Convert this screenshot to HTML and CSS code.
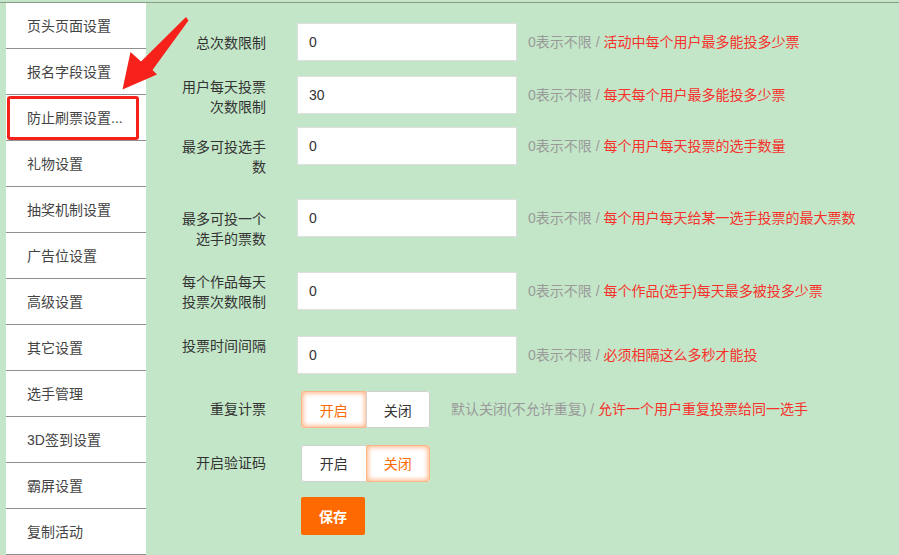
FILE: index.html
```html
<!DOCTYPE html>
<html lang="zh-CN">
<head>
<meta charset="utf-8">
<title>防止刷票设置</title>
<link rel="stylesheet" href="styles.css">
</head>
<body>
<div class="page">
  <nav class="sidebar">
    <div class="nav-item">页头页面设置</div>
    <div class="nav-item">报名字段设置</div>
    <div class="nav-item">防止刷票设置...</div>
    <div class="nav-item">礼物设置</div>
    <div class="nav-item">抽奖机制设置</div>
    <div class="nav-item">广告位设置</div>
    <div class="nav-item">高级设置</div>
    <div class="nav-item">其它设置</div>
    <div class="nav-item">选手管理</div>
    <div class="nav-item">3D签到设置</div>
    <div class="nav-item">霸屏设置</div>
    <div class="nav-item">复制活动</div>
  </nav>
  <main class="main">
    <div class="row r1">
      <label class="label">总次数限制</label>
      <input class="input" type="text" value="0">
      <span class="hint"><span class="gray">0表示不限 / </span><span class="red">活动中每个用户最多能投多少票</span></span>
    </div>
    <div class="row r2">
      <label class="label label--top">用户每天投票次数限制</label>
      <input class="input" type="text" value="30">
      <span class="hint"><span class="gray">0表示不限 / </span><span class="red">每天每个用户最多能投多少票</span></span>
    </div>
    <div class="row r3">
      <label class="label">最多可投选手数</label>
      <input class="input" type="text" value="0">
      <span class="hint"><span class="gray">0表示不限 / </span><span class="red">每个用户每天投票的选手数量</span></span>
    </div>
    <div class="row r4">
      <label class="label">最多可投一个选手的票数</label>
      <input class="input" type="text" value="0">
      <span class="hint"><span class="gray">0表示不限 / </span><span class="red">每个用户每天给某一选手投票的最大票数</span></span>
    </div>
    <div class="row r5">
      <label class="label label--top">每个作品每天投票次数限制</label>
      <input class="input" type="text" value="0">
      <span class="hint"><span class="gray">0表示不限 / </span><span class="red">每个作品(选手)每天最多被投多少票</span></span>
    </div>
    <div class="row r6">
      <label class="label label--top">投票时间间隔</label>
      <input class="input" type="text" value="0">
      <span class="hint"><span class="gray">0表示不限 / </span><span class="red">必须相隔这么多秒才能投</span></span>
    </div>
    <div class="row r7">
      <label class="label label--mid">重复计票</label>
      <div class="toggle">
        <span class="tbtn tbtn--on">开启</span><span class="tbtn">关闭</span>
      </div>
      <span class="hint hint--wide"><span class="gray">默认关闭(不允许重复) / </span><span class="red">允许一个用户重复投票给同一选手</span></span>
    </div>
    <div class="row r8">
      <label class="label label--mid">开启验证码</label>
      <div class="toggle">
        <span class="tbtn">开启</span><span class="tbtn tbtn--on">关闭</span>
      </div>
    </div>
    <div class="row r9">
      <span class="label"></span>
      <button class="save" type="button">保存</button>
    </div>
  </main>
  <div class="mark"></div>
  <svg class="arrow" width="80" height="80" viewBox="110 10 80 80" aria-hidden="true">
    <polygon points="186,17 188.5,20.5 152.5,70 157,74.5 122.5,89.5 130.5,52 141,61.5" fill="#f5211a"/>
  </svg>
</div>
</body>
</html>
```

FILE: styles.css
```css
* { box-sizing: border-box; }

html, body {
  margin: 0;
  padding: 0;
}

body {
  background: #c3e6c8;
  font-family: "Liberation Sans", "Noto Sans CJK SC", sans-serif;
  font-size: 14px;
  color: #333;
  padding-top: 2px;
  width: 899px;
  height: 555px;
  overflow: hidden;
}

.page {
  position: relative;
  display: flex;
  align-items: flex-start;
  border-top: 1px solid #8a9a8c;
  padding-left: 6px;
  height: 553px;
}

.sidebar {
  width: 140px;
  flex: none;
  background: #fff;
}

.nav-item {
  height: 46px;
  border-bottom: 1px solid #8f8f8f;
  padding-left: 21px;
  display: flex;
  align-items: center;
  line-height: 20px;
  color: #444;
  white-space: nowrap;
}

.main {
  flex: 1;
  padding: 20px 0 0 24px;
  display: flex;
  flex-direction: column;
}

.row {
  display: flex;
  align-items: flex-start;
}
.r1 { height: 53px; }
.r2 { height: 50.5px; }
.r3 { height: 72.3px; }
.r4 { height: 73px; }
.r5 { height: 64px; }
.r6 { height: 55.7px; }
.r7 { height: 53.3px; }
.r8 { height: 52.3px; }

.label {
  width: 96px;
  flex: none;
  text-align: right;
  line-height: 20px;
  padding-top: 10px;
  margin-right: 31px;
  color: #333;
}
.label--top { padding-top: 0.5px; }
.label--mid { padding-top: 8px; }

.input {
  width: 220px;
  height: 38px;
  border: 1px solid #dedede;
  border-radius: 1px;
  background: #fff;
  padding: 0 11px;
  font-family: "Liberation Sans", "Noto Sans CJK SC", sans-serif;
  font-size: 14px;
  color: #333;
  outline: none;
  flex: none;
}

.hint {
  margin-left: 11px;
  line-height: 38px;
  white-space: nowrap;
}
.hint--wide { margin-left: 21px; line-height: 37px; }
.gray { color: #9a9a9a; }
.red { color: #f7312b; }

.toggle {
  display: flex;
  margin-left: 4px;
  border-radius: 3px;
  background: #fff;
  flex: none;
}

.tbtn {
  width: 64.5px;
  height: 37px;
  display: flex;
  align-items: center;
  justify-content: center;
  border: 1px solid #d0d0d0;
  color: #333;
  background: #fff;
}
.tbtn:first-child { border-radius: 3px 0 0 3px; border-right-width: 0; }
.tbtn:last-child { border-radius: 0 3px 3px 0; }
.tbtn--on {
  color: #ff6a00;
  border: 1px solid #fbb68a;
  box-shadow: inset 0 0 5px 1px rgba(255, 110, 20, 0.55);
}
.tbtn--on:first-child { border-right-width: 0; }

.save {
  margin-left: 4px;
  width: 64px;
  height: 38px;
  border: none;
  border-radius: 2px;
  background: #ff6a00;
  color: #fff;
  font-family: "Liberation Sans", "Noto Sans CJK SC", sans-serif;
  font-size: 14px;
  font-weight: bold;
  padding: 0;
}

.mark {
  position: absolute;
  left: 6.5px;
  top: 92.5px;
  width: 132px;
  height: 44px;
  border: 3px solid #f5211a;
  border-radius: 3px;
}

.arrow {
  position: absolute;
  left: 110px;
  top: 7px;
}
```
